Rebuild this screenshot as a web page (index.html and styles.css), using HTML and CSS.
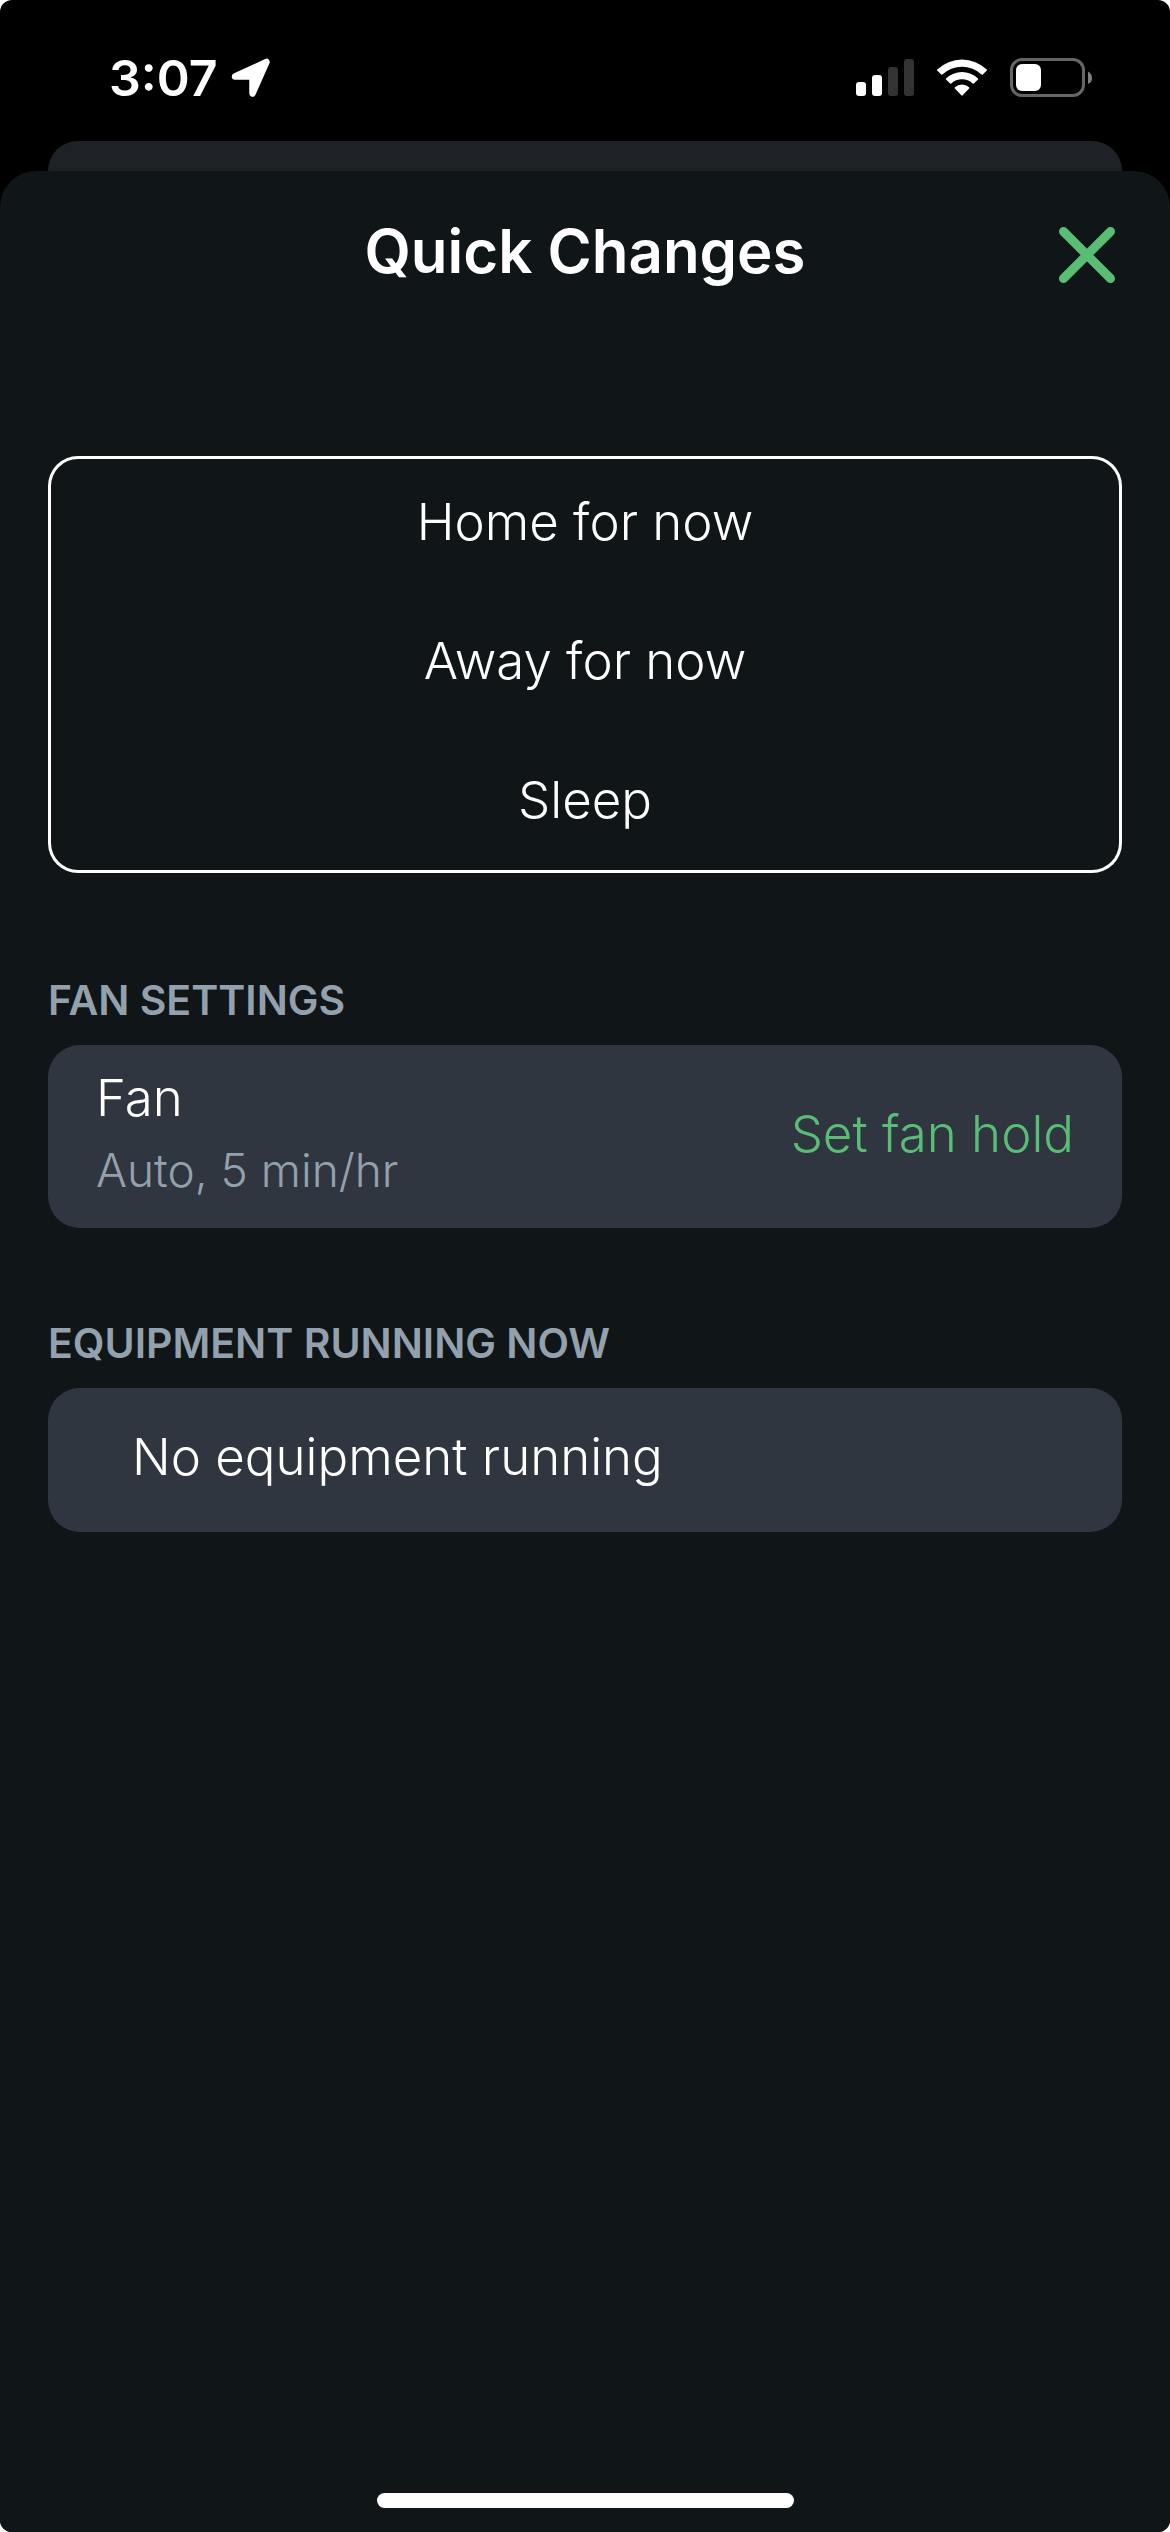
FILE: index.html
```
<!DOCTYPE html>
<html lang="en">
<head>
  <meta charset="utf-8">
  <meta name="viewport" content="width=device-width, initial-scale=1">
  <title>Quick Changes</title>
  <link rel="stylesheet" href="styles.css">
</head>
<body>
  <div class="screen">
    <div class="status-bar">
      <div class="status-left">
        <span class="clock">3:07</span>
        <svg class="location" width="40" height="40" viewBox="0 0 40 40" aria-hidden="true">
          <path d="M4 18.500 L35.500 4 L21.500 35.500 L21.500 18.500 Z" fill="#fff" stroke="#fff" stroke-width="6.500" stroke-linejoin="round"/>
        </svg>
      </div>
      <div class="status-right">
        <svg width="58" height="40" viewBox="0 0 58 40" aria-hidden="true">
          <rect x="0" y="24" width="10" height="14" rx="3" fill="#fff"/>
          <rect x="16" y="17" width="10" height="21" rx="3" fill="#fff"/>
          <rect x="32" y="9" width="10" height="29" rx="3" fill="#333"/>
          <rect x="48" y="1" width="10" height="37" rx="3" fill="#333"/>
        </svg>
        <svg width="52" height="40" viewBox="0 0 52 40" aria-hidden="true">
          <path d="M1.200 11.500 A36 36 0 0 1 50.800 11.500 Q51.300 12 50.800 12.500 L46.800 16.500 Q46.200 17 45.600 16.500 A28.500 28.500 0 0 0 6.400 16.500 Q5.800 17 5.200 16.500 L1.200 12.500 Q0.700 12 1.200 11.500 Z" fill="#fff"/>
          <path d="M10 20.400 A23.300 23.300 0 0 1 42 20.400 Q42.500 21 42 21.500 L37.900 25.500 Q37.300 26 36.700 25.500 A15.800 15.800 0 0 0 15.300 25.500 Q14.700 26 14.100 25.500 L10 21.500 Q9.500 21 10 20.400 Z" fill="#fff"/>
          <path d="M18.900 29.300 A10.700 10.700 0 0 1 33.100 29.300 Q33.600 30 33.100 30.500 L26.700 37.300 Q26 38 25.300 37.300 L18.900 30.500 Q18.400 30 18.900 29.300 Z" fill="#fff"/>
        </svg>
        <svg width="82" height="40" viewBox="0 0 82 40" aria-hidden="true">
          <rect x="1.500" y="1.500" width="72" height="36" rx="10.500" fill="none" stroke="#666" stroke-width="3"/>
          <rect x="6" y="6" width="25" height="27" rx="6" fill="#fff"/>
          <path d="M78 13.500 Q82 15.500 82 20 Q82 24.500 78 26 Z" fill="#808080"/>
        </svg>
      </div>
    </div>

    <div class="card-behind"></div>

    <main class="sheet">
      <header class="sheet-header">
        <h1 class="title">Quick Changes</h1>
        <button class="close" type="button" aria-label="Close">
          <svg width="56" height="56" viewBox="0 0 56 56" aria-hidden="true">
            <path d="M4.500 4.500 L51.500 51.500 M51.500 4.500 L4.500 51.500" stroke="#5abd76" stroke-width="9" stroke-linecap="round"/>
          </svg>
        </button>
      </header>

      <div class="choices">
        <button class="choice" type="button">Home for now</button>
        <button class="choice" type="button">Away for now</button>
        <button class="choice" type="button">Sleep</button>
      </div>

      <section class="section">
        <h2 class="section-title">FAN SETTINGS</h2>
        <div class="card fan-card">
          <div class="fan-info">
            <span class="label">Fan</span>
            <span class="detail">Auto, 5 min/hr</span>
          </div>
          <button class="action" type="button">Set fan hold</button>
        </div>
      </section>

      <section class="section">
        <h2 class="section-title">EQUIPMENT RUNNING NOW</h2>
        <div class="card equipment-card">
          <span class="label">No equipment running</span>
        </div>
      </section>

      <div class="home-indicator"></div>
    </main>
  </div>
</body>
</html>
```

FILE: styles.css
```
* {
  box-sizing: border-box;
}

body {
  margin: 0;
  background: #fff;
  color: #fff;
  font-family: Inter, "Liberation Sans", sans-serif;
}

button {
  margin: 0;
  padding: 0;
  border: 0;
  background: none;
  color: inherit;
  font: inherit;
  cursor: pointer;
}

svg {
  display: block;
}

.screen {
  display: flex;
  flex-direction: column;
  min-height: 100vh;
  overflow: hidden;
  border-radius: 12px;
  background: #000;
}

.status-bar {
  display: flex;
  justify-content: space-between;
  height: 141px;
  padding: 58px 78px 0 109px;
}

.status-left,
.status-right {
  display: flex;
  align-items: flex-start;
}

.status-left {
  gap: 13px;
}

.status-right {
  gap: 22px;
}

.clock {
  font-size: 50px;
  font-weight: 600;
  line-height: 40px;
}

.card-behind {
  height: 60px;
  margin: 0 48px -30px;
  border-radius: 30px;
  background: #1e2126;
}

.sheet {
  display: flex;
  flex: 1;
  flex-direction: column;
  padding: 48px 48px 24px;
  border-radius: 36px 36px 0 0;
  background: #101518;
}

.sheet-header {
  display: grid;
  grid-template-columns: 1fr auto 1fr;
  align-items: center;
  margin-bottom: 173px;
}

.title {
  grid-column: 2;
  margin: 0;
  font-size: 60px;
  font-weight: 600;
  line-height: 64px;
}

.close {
  justify-self: end;
  padding: 8px 7px 0 0;
}

.choices {
  display: flex;
  flex-direction: column;
  margin-bottom: 12px;
  border-radius: 30px;
  box-shadow: inset 0 0 0 3px #fff;
}

.choice {
  height: 139px;
  padding-bottom: 8px;
  font-size: 51px;
  font-weight: 300;
}

.section {
  margin-top: 87px;
}

.section-title {
  margin: 0 0 17px;
  color: #93a1ad;
  font-size: 41px;
  font-weight: 600;
  line-height: 56px;
}

.card {
  display: flex;
  align-items: center;
  border-radius: 32px;
  background: #2f3640;
  font-size: 51px;
  font-weight: 300;
}

.fan-card {
  justify-content: space-between;
  min-height: 183px;
  padding: 16px 48px 22px;
}

.fan-info {
  display: flex;
  flex-direction: column;
}

.label {
  line-height: 72px;
}

.detail {
  color: #93a1ad;
  font-size: 46px;
  line-height: 72px;
}

.action {
  color: #5abd76;
}

.equipment-card {
  min-height: 144px;
  padding: 0 84px 6px;
}

.home-indicator {
  align-self: center;
  width: 417px;
  height: 15px;
  margin-top: auto;
  border-radius: 8px;
  background: #fff;
}
```
